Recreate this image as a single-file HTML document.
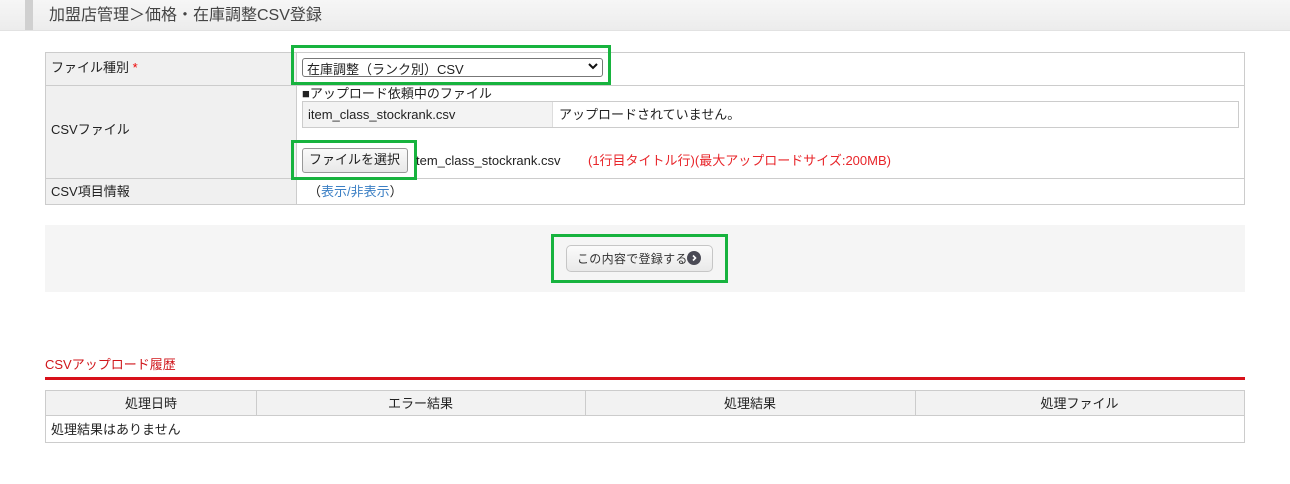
<!DOCTYPE html>
<html><head><meta charset="utf-8"><style>
*{margin:0;padding:0;box-sizing:border-box}
body{width:1290px;height:484px;background:#fff;position:relative;overflow:hidden;font-family:"Liberation Sans","Noto Sans CJK JP",sans-serif;font-size:13px;color:#222}
.a{position:absolute}
.t{position:absolute;white-space:nowrap;line-height:16px}
.lab{background:#f0f0f0}
.g{position:absolute;border:3px solid #17b33e}
</style></head><body>
<div class="a" style="left:0;top:0;width:1290px;height:31px;background:linear-gradient(#f6f6f6,#ececec);border-bottom:1px solid #e2e2e2"></div>
<div class="a" style="left:25px;top:0;width:8px;height:30px;background:#d0d0d0"></div>
<div class="t" style="left:49px;top:7px;font-size:16px;line-height:18px;color:#444">加盟店管理＞価格・在庫調整CSV登録</div>

<div class="a" style="left:45px;top:52px;width:1200px;height:153px;border:1px solid #ccc"></div>
<div class="a lab" style="left:46px;top:53px;width:250px;height:151px"></div>
<div class="a" style="left:296px;top:53px;width:1px;height:151px;background:#ccc"></div>
<div class="a" style="left:46px;top:85px;width:1198px;height:1px;background:#ccc"></div>
<div class="a" style="left:46px;top:178px;width:1198px;height:1px;background:#ccc"></div>
<div class="t" style="left:51px;top:60px">ファイル種別 <span style="color:#e00">*</span></div>
<div class="t" style="left:51px;top:122px">CSVファイル</div>
<div class="t" style="left:51px;top:184px">CSV項目情報</div>

<div class="a" style="left:302px;top:58px;width:301px;height:19px;border:1px solid #777;border-radius:3px;background:#fff"></div>
<div class="t" style="left:307px;top:62px">在庫調整（ランク別）CSV</div>
<svg class="a" style="left:588px;top:62px" width="10" height="8"><path d="M1 2L5 6L9 2" stroke="#111" stroke-width="2" fill="none"/></svg>
<div class="g" style="left:291px;top:45px;width:320px;height:40px"></div>

<div class="t" style="left:302px;top:86px">■アップロード依頼中のファイル</div>
<div class="a" style="left:302px;top:101px;width:937px;height:27px;border:1px solid #ccc"></div>
<div class="a" style="left:303px;top:102px;width:250px;height:25px;background:#f3f3f3;border-right:1px solid #ddd"></div>
<div class="t" style="left:308px;top:107px">item_class_stockrank.csv</div>
<div class="t" style="left:559px;top:107px">アップロードされていません。</div>

<div class="a" style="left:302px;top:148px;width:106px;height:25px;border:1px solid #999;border-radius:3px;background:linear-gradient(#fafafa,#e8e8e8)"></div>
<div class="t" style="left:309px;top:152px">ファイルを選択</div>
<div class="g" style="left:291px;top:140px;width:126px;height:40px"></div>
<div class="t" style="left:416px;top:153px">tem_class_stockrank.csv</div>
<div class="t" style="left:588px;top:153px;color:#e8252a">(1行目タイトル行)(最大アップロードサイズ:200MB)</div>
<div class="t" style="left:308px;top:184px">（<span style="color:#3b7fc4">表示/非表示</span>）</div>

<div class="a" style="left:45px;top:225px;width:1200px;height:67px;background:#f5f5f5"></div>
<div class="a" style="left:566px;top:245px;width:147px;height:27px;border:1px solid #c6c6c6;border-radius:5px;background:linear-gradient(#fbfbfb,#e9e9e9)"></div>
<div class="t" style="left:577px;top:251px;font-size:12px;color:#333;letter-spacing:0.3px">この内容で登録する</div>
<div class="a" style="left:687px;top:251px;width:14px;height:14px;border-radius:50%;background:#4a4a55"></div>
<svg class="a" style="left:687px;top:251px" width="14" height="14"><path d="M6 4.5L8.5 7L6 9.5" stroke="#fff" stroke-width="1.6" fill="none"/></svg>
<div class="g" style="left:551px;top:234px;width:177px;height:49px"></div>

<div class="t" style="left:45px;top:357px;color:#d0161b">CSVアップロード履歴</div>
<div class="a" style="left:45px;top:377px;width:1200px;height:3px;background:#d8101a"></div>
<div class="a" style="left:45px;top:390px;width:1200px;height:53px;border:1px solid #ccc"></div>
<div class="a lab" style="left:46px;top:391px;width:1198px;height:25px;background:#f2f2f2;border-bottom:1px solid #ccc"></div>
<div class="a" style="left:256px;top:391px;width:1px;height:25px;background:#ccc"></div>
<div class="a" style="left:585px;top:391px;width:1px;height:25px;background:#ccc"></div>
<div class="a" style="left:915px;top:391px;width:1px;height:25px;background:#ccc"></div>
<div class="t" style="left:46px;top:396px;width:210px;text-align:center">処理日時</div>
<div class="t" style="left:256px;top:396px;width:329px;text-align:center">エラー結果</div>
<div class="t" style="left:585px;top:396px;width:330px;text-align:center">処理結果</div>
<div class="t" style="left:915px;top:396px;width:329px;text-align:center">処理ファイル</div>
<div class="t" style="left:51px;top:422px">処理結果はありません</div>
</body></html>
